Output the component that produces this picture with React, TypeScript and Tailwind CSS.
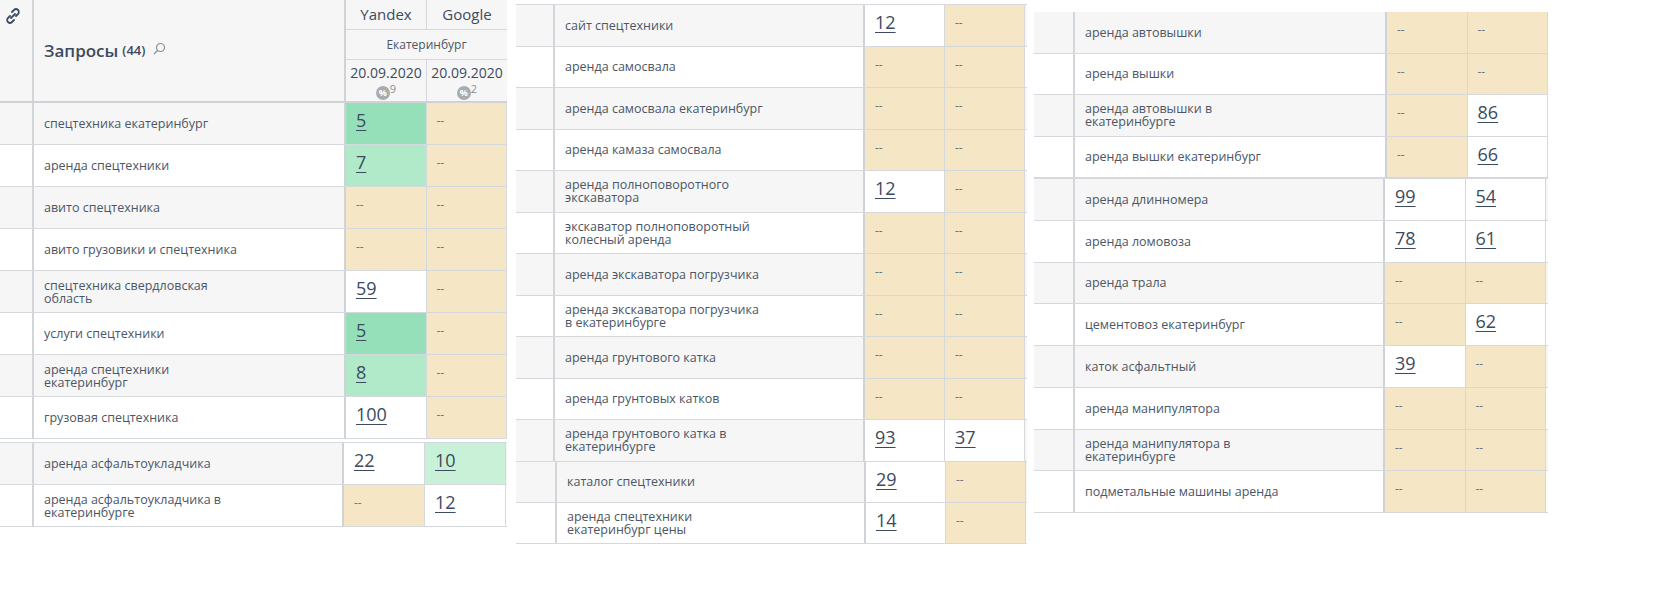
type Cell = { v: string; c: "g" | "l" | "p" | "w" | "b" };
type Row = { name: string; y: Cell; g: Cell };

const bgOf = (c: Cell["c"]) =>
  c === "g" ? "bg-[#95e0b8]" : c === "l" ? "bg-[#b0eac8]" : c === "p" ? "bg-[#c9f1d8]" : c === "w" ? "bg-white" : "bg-[#f5e7c5]";

const d: Cell = { v: "--", c: "b" };
const w = (v: string): Cell => ({ v, c: "w" });

function ValueCell({ cell, width }: { cell: Cell; width: string }) {
  return (
    <div className={`${width} ${bgOf(cell.c)} border-r border-[#d5d9de] h-full px-2.5 pt-1 shrink-0`}>
      {cell.v === "--" ? (
        <span className="text-[12px] text-[#6b7480]">--</span>
      ) : (
        <span className="text-[18px] text-[#3c4b5f] underline underline-offset-[3px] decoration-1">{cell.v}</span>
      )}
    </div>
  );
}

function Block({
  rows,
  first,
  nameW,
  valW,
  rowH,
  startGrey = true,
  className = "",
}: {
  rows: Row[];
  first: string;
  nameW: string;
  valW: string;
  rowH: string;
  startGrey?: boolean;
  className?: string;
}) {
  return (
    <div className={`flex flex-col ${className}`}>
      {rows.map((r, i) => {
        const grey = (i % 2 === 0) === startGrey;
        return (
          <div key={i} className={`flex ${rowH} border-b border-[#d5d9de] ${grey ? "bg-[#f6f6f6]" : "bg-white"}`}>
            <div className={`${first} border-r-2 border-[#d2d6db] shrink-0`} />
            <div className={`${nameW} border-r-2 border-[#cfd3d8] shrink-0 flex items-center pl-2.5 text-[12.5px] leading-[13px] text-[#4b5666]`}>
              <span className="max-w-[200px]">{r.name}</span>
            </div>
            <ValueCell cell={r.y} width={valW} />
            <ValueCell cell={r.g} width={valW} />
          </div>
        );
      })}
    </div>
  );
}

const col1a: Row[] = [
  { name: "спецтехника екатеринбург", y: { v: "5", c: "g" }, g: d },
  { name: "аренда спецтехники", y: { v: "7", c: "l" }, g: d },
  { name: "авито спецтехника", y: d, g: d },
  { name: "авито грузовики и спецтехника", y: d, g: d },
  { name: "спецтехника свердловская область", y: w("59"), g: d },
  { name: "услуги спецтехники", y: { v: "5", c: "g" }, g: d },
  { name: "аренда спецтехники екатеринбург", y: { v: "8", c: "l" }, g: d },
  { name: "грузовая спецтехника", y: w("100"), g: d },
];
const col1b: Row[] = [
  { name: "аренда асфальтоукладчика", y: w("22"), g: { v: "10", c: "p" } },
  { name: "аренда асфальтоукладчика в екатеринбурге", y: d, g: w("12") },
];
const col2a: Row[] = [
  { name: "сайт спецтехники", y: w("12"), g: d },
  { name: "аренда самосвала", y: d, g: d },
  { name: "аренда самосвала екатеринбург", y: d, g: d },
  { name: "аренда камаза самосвала", y: d, g: d },
  { name: "аренда полноповоротного экскаватора", y: w("12"), g: d },
  { name: "экскаватор полноповоротный колесный аренда", y: d, g: d },
  { name: "аренда экскаватора погрузчика", y: d, g: d },
  { name: "аренда экскаватора погрузчика в екатеринбурге", y: d, g: d },
  { name: "аренда грунтового катка", y: d, g: d },
  { name: "аренда грунтовых катков", y: d, g: d },
  { name: "аренда грунтового катка в екатеринбурге", y: w("93"), g: w("37") },
];
const col2b: Row[] = [
  { name: "каталог спецтехники", y: w("29"), g: d },
  { name: "аренда спецтехники екатеринбург цены", y: w("14"), g: d },
];
const col3a: Row[] = [
  { name: "аренда автовышки", y: d, g: d },
  { name: "аренда вышки", y: d, g: d },
  { name: "аренда автовышки в екатеринбурге", y: d, g: w("86") },
  { name: "аренда вышки екатеринбург", y: d, g: w("66") },
];
const col3b: Row[] = [
  { name: "аренда длинномера", y: w("99"), g: w("54") },
  { name: "аренда ломовоза", y: w("78"), g: w("61") },
  { name: "аренда трала", y: d, g: d },
  { name: "цементовоз екатеринбург", y: d, g: w("62") },
  { name: "каток асфальтный", y: w("39"), g: d },
  { name: "аренда манипулятора", y: d, g: d },
  { name: "аренда манипулятора в екатеринбурге", y: d, g: d },
  { name: "подметальные машины аренда", y: d, g: d },
];

function Badge({ n }: { n: string }) {
  return (
    <div className="flex items-start justify-center">
      <span className="w-[14px] h-[14px] rounded-full bg-[#a8acb0] text-white text-[9px] leading-[14px] text-center font-bold mt-[3px]">%</span>
      <span className="text-[11px] text-[#8a9098] leading-none">{n}</span>
    </div>
  );
}

function Header() {
  return (
    <div className="flex h-[103px] bg-[#f6f6f6] border-b-2 border-[#cfd3d8]">
      <div className="w-[34px] border-r-2 border-[#d2d6db] shrink-0 pt-2 pl-1.5">
        <svg width="14" height="16" viewBox="0 0 14 16" fill="none" stroke="#3c4b5f" strokeWidth="1.8" strokeLinecap="round">
          <path d="M6 4 L8 2 A2.5 2.5 0 0 1 12 6 L10 8" />
          <path d="M8 12 L6 14 A2.5 2.5 0 0 1 2 10 L4 8" />
          <path d="M5 10 L9 6" />
        </svg>
      </div>
      <div className="w-[312px] border-r-2 border-[#cfd3d8] shrink-0 flex items-center pl-2.5 text-[#3c4b5f]">
        <span className="text-[17px] font-semibold">Запросы</span>
        <span className="text-[13px] font-semibold ml-1">(44)</span>
        <svg className="ml-2 mb-1" width="13" height="13" viewBox="0 0 13 13" fill="none" stroke="#8a9098" strokeWidth="1.2">
          <circle cx="7.5" cy="5.5" r="4" />
          <path d="M4.5 8.5 L1 12" />
        </svg>
      </div>
      <div className="flex flex-col w-[161px] text-[#3c4b5f]">
        <div className="flex h-[30px] border-b border-[#d5d9de] text-[15px]">
          <div className="w-[81px] border-r border-[#d5d9de] flex items-center justify-center">Yandex</div>
          <div className="w-[80px] flex items-center justify-center">Google</div>
        </div>
        <div className="h-[30px] border-b border-[#d5d9de] flex items-center justify-center text-[12px] text-[#4b5666]">Екатеринбург</div>
        <div className="flex flex-1 text-[14px]">
          <div className="w-[81px] border-r border-[#d5d9de] flex flex-col items-center pt-0.5">
            20.09.2020
            <Badge n="9" />
          </div>
          <div className="w-[80px] flex flex-col items-center pt-0.5">
            20.09.2020
            <Badge n="2" />
          </div>
        </div>
      </div>
    </div>
  );
}

export default function App() {
  return (
    <div className="w-full bg-white flex" style={{ fontFamily: '"Open Sans", "Liberation Sans", sans-serif' }}>
      <div className="w-[507px] shrink-0 flex flex-col">
        <Header />
        <Block rows={col1a} first="w-[34px]" nameW="w-[312px]" valW="w-[80.5px]" rowH="h-[42px]" />
        <Block rows={col1b} first="w-[34px]" nameW="w-[310px]" valW="w-[81px]" rowH="h-[42px]" className="mt-[3px] border-t border-[#d5d9de]" />
      </div>
      <div className="w-[511px] shrink-0 ml-[9px] flex flex-col mt-[4px]">
        <Block rows={col2a} first="w-[39px]" nameW="w-[310px]" valW="w-[80px]" rowH="h-[41.5px]" className="border-t border-[#d5d9de]" />
        <Block rows={col2b} first="w-[41px]" nameW="w-[309px]" valW="w-[80px]" rowH="h-[41px]" />
      </div>
      <div className="w-[514px] shrink-0 ml-[7px] flex flex-col mt-[12px]">
        <Block rows={col3a} first="w-[41px]" nameW="w-[312px]" valW="w-[80.5px]" rowH="h-[41.5px]" />
        <Block rows={col3b} first="w-[41px]" nameW="w-[310px]" valW="w-[80.5px]" rowH="h-[41.75px]" className="border-t border-[#d5d9de]" />
      </div>
    </div>
  );
}
